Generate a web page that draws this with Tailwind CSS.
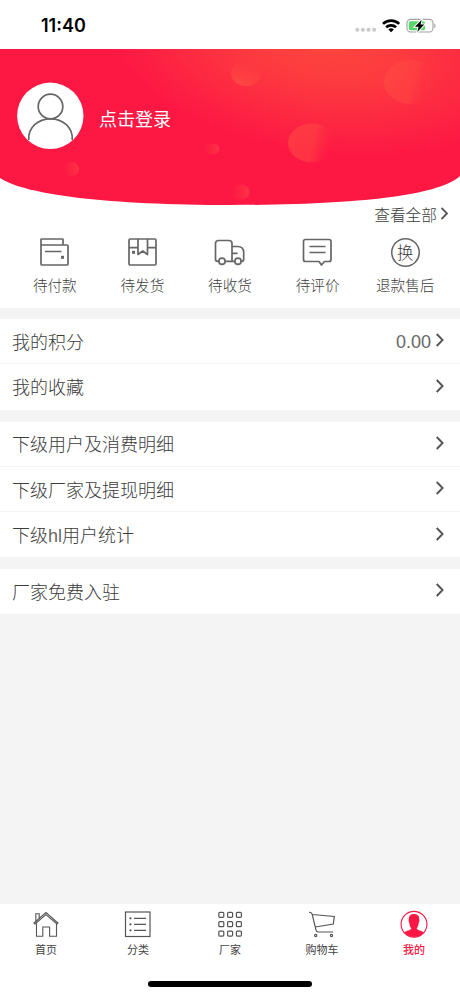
<!DOCTYPE html>
<html lang="zh-CN">
<head>
<meta charset="utf-8">
<meta name="viewport" content="width=device-width, initial-scale=1">
<title>我的</title>
<script src="https://cdn.jsdelivr.net/npm/@tailwindcss/browser@4"></script>
</head>
<body class="bg-white">
<div class="flex h-[996px] w-[460px] flex-col overflow-hidden bg-white font-['Liberation_Sans','Noto_Sans_CJK_SC',sans-serif] font-light text-[#3c3c3c]">

  <!-- status bar -->
  <header class="flex h-[49px] shrink-0 items-center justify-between pl-[41px] pr-6 pt-0.5">
    <span class="font-['Inter',sans-serif] text-[18px] leading-none font-semibold text-black">11:40</span>
    <svg class="h-[18px] w-[81px]" viewBox="355 16 81 18" fill="none">
      <g fill="#c9c9c9"><circle cx="357.300" cy="28.700" r="2"/><circle cx="362.900" cy="28.700" r="2"/><circle cx="368.500" cy="28.700" r="2"/><circle cx="374.100" cy="28.700" r="2"/></g>
      <g stroke="#000" stroke-width="2.700"><path d="M383 22.900a11.600 11.600 0 0 1 16.200 0"/><path d="M386.100 26.300a7.200 7.200 0 0 1 10 0"/></g>
      <path d="M388.300 28.500a4 4 0 0 1 5.600 0L391.100 31.300z" fill="#000"/>
      <rect x="407" y="18.400" width="26" height="12.600" rx="3.600" stroke="#a2a2a2" stroke-width="1.100"/>
      <path d="M434.300 22.500v4.500c1.500-.6 1.500-3.900 0-4.500z" fill="#999"/>
      <rect x="408.800" y="20.200" width="16.200" height="9" rx="1.800" fill="#56d769"/>
      <path d="M421.700 18.700l-6.800 7h3.700l-1.300 5.300 7-7.500h-3.800z" fill="#000" stroke="#fff" stroke-width="2" paint-order="stroke"/>
    </svg>
  </header>

  <!-- profile banner -->
  <section class="relative h-[156px] shrink-0">
    <svg class="absolute inset-0 h-[156px] w-[460px]" viewBox="0 0 460 156">
      <defs>
        <radialGradient id="glow" gradientUnits="userSpaceOnUse" cx="0" cy="0" r="1" gradientTransform="translate(325 -8) rotate(8) scale(220 112)">
          <stop offset="0" stop-color="#fd453d"/><stop offset=".35" stop-color="#fd3b3f"/><stop offset="1" stop-color="#fd1844"/>
        </radialGradient>
        <linearGradient id="orb" x1="0" y1="0" x2="1" y2="0.2">
          <stop offset="0" stop-color="#ff4b43" stop-opacity=".6"/><stop offset=".6" stop-color="#ff4443" stop-opacity=".6"/><stop offset="1" stop-color="#fd2a42" stop-opacity="0"/>
        </linearGradient>
        <linearGradient id="drop" x1="0.2" y1="1" x2="0.7" y2="0">
          <stop offset="0" stop-color="#ff5747" stop-opacity=".7"/><stop offset="1" stop-color="#ff4541" stop-opacity="0"/>
        </linearGradient>
        <linearGradient id="dot" x1="1" y1="0.4" x2="0" y2="0.5">
          <stop offset="0" stop-color="#ff4346" stop-opacity=".65"/><stop offset="1" stop-color="#ff3145" stop-opacity=".1"/>
        </linearGradient>
      </defs>
      <path d="M0 0H460V127C440 146 360 156 230 156C110 156 25 146 0 129Z" fill="url(#glow)"/>
      <ellipse cx="411" cy="33" rx="27" ry="22" fill="url(#orb)"/>
      <ellipse cx="312" cy="94" rx="24" ry="19.500" fill="url(#orb)"/>
      <ellipse cx="246" cy="24" rx="15" ry="13" fill="url(#drop)"/>
      <ellipse cx="212" cy="100" rx="7.500" ry="5.500" fill="url(#dot)"/>
      <ellipse cx="71.500" cy="120" rx="7.500" ry="7" fill="url(#dot)"/>
      <ellipse cx="241" cy="143" rx="8.500" ry="7.500" fill="url(#dot)"/>
    </svg>
    <div class="relative flex items-center gap-[15px] pl-[17px] pt-[33px]">
      <svg class="size-[67px]" viewBox="0 0 67 67" fill="none">
        <circle cx="33.300" cy="33.800" r="33.200" fill="#fff"/>
        <g stroke="#666" stroke-width="1.700"><circle cx="33.500" cy="24.500" r="12.300"/><path d="M11.700 58C11 45.500 21 36.800 33.500 36.800S56 45.500 55.300 58"/></g>
      </svg>
      <span class="pt-2 text-[18px] leading-6 font-normal text-white">点击登录</span>
    </div>
  </section>

  <!-- orders -->
  <section class="h-[103px] shrink-0">
    <div class="flex h-5 items-center justify-end gap-1 pr-[11px]">
      <span class="pt-0.5 text-[15.700px] leading-5">查看全部</span>
      <svg class="mb-[3px] h-[13px] w-2" viewBox="0 0 8 13" fill="none" stroke="#555" stroke-width="1.800"><path d="M.5 1l5.500 5.500L.5 12"/></svg>
    </div>
    <div class="grid grid-cols-5 px-[11px] pt-3 text-[14.600px] leading-5">
      <div class="flex flex-col items-center gap-2">
        <svg class="size-[31px]" viewBox="0 0 31 31" fill="none" stroke="#666" stroke-width="1.700" stroke-linejoin="round"><path d="M24 8V2.500Q24 2 23.500 2H2.500Q2 2 2 2.500V27Q2 28 3 28H28Q29 28 29 27V9Q29 8 28 8H2M6 14.500H22.500"/><rect x="22" y="18.800" width="3" height="3" fill="#666" stroke="none"/></svg>
        <span>待付款</span>
      </div>
      <div class="flex flex-col items-center gap-2">
        <svg class="size-[31px]" viewBox="0 0 31 31" fill="none" stroke="#666" stroke-width="1.700" stroke-linejoin="round"><rect x="2" y="2" width="27" height="26" rx="1.200"/><path d="M2 10.700H11M20.500 10.700H29M11 2V17.500L15.700 14L20.500 17.500V2"/><rect x="5" y="13.800" width="3" height="3" fill="#666" stroke="none"/></svg>
        <span>待发货</span>
      </div>
      <div class="flex flex-col items-center gap-2">
        <svg class="size-[31px]" viewBox="0 0 31 31" fill="none" stroke="#666" stroke-width="1.700"><path d="M4.900 24.300H3.500Q1.500 24.300 1.500 22.300V6.500Q1.500 3.500 4.500 3.500H15Q18 3.500 18 6.500V24.300H11.100M18 9.500H23.500Q29.700 9.500 29.700 15.500V22.300Q29.700 24.300 27.700 24.300H27.100M18 24.300H20.900M18 16.300H23.500"/><circle cx="8" cy="24.300" r="3.100"/><circle cx="24" cy="24.300" r="3.100"/></svg>
        <span>待收货</span>
      </div>
      <div class="flex flex-col items-center gap-2">
        <svg class="size-[31px]" viewBox="0 0 31 31" fill="none" stroke="#666" stroke-width="1.700" stroke-linejoin="round"><path d="M3.500 2.500H27Q29 2.500 29 4.500V22.500Q29 24.500 27 24.500H22.500L19.500 28L17 24.500H3.500Q1.500 24.500 1.500 22.500V4.500Q1.500 2.500 3.500 2.500ZM7.500 9.500H23.500M7.500 15.500H23.500"/></svg>
        <span>待评价</span>
      </div>
      <div class="flex flex-col items-center gap-2">
        <div class="grid size-[31px] place-items-center">
          <span class="flex size-[29px] items-center justify-center rounded-full text-[16.500px] leading-none ring-[1.500px] ring-[#666] ring-inset"><span class="pt-px">换</span></span>
        </div>
        <span>退款售后</span>
      </div>
    </div>
  </section>

  <!-- menu -->
  <main class="flex grow flex-col gap-3 bg-[#f4f4f4] pt-[11px] text-[18px] leading-6">
    <div class="divide-y divide-[#f4f4f4] bg-white">
      <div class="flex h-[45px] items-center justify-between pl-3 pr-4"><span class="pt-[3px]">我的积分</span><span class="flex items-center gap-[5px]"><span class="pt-[2px] text-[#666]">0.00</span><svg class="mb-[3px] h-[14px] w-2" viewBox="0 0 8 14" fill="none" stroke="#555" stroke-width="1.900"><path d="M.7 1l5.900 6L.7 13"/></svg></span></div>
      <div class="flex h-[46px] items-center justify-between pl-3 pr-4"><span class="pt-[2px]">我的收藏</span><svg class="mb-[3px] h-[14px] w-2" viewBox="0 0 8 14" fill="none" stroke="#555" stroke-width="1.900"><path d="M.7 1l5.900 6L.7 13"/></svg></div>
    </div>
    <div class="divide-y divide-[#f4f4f4] bg-white">
      <div class="flex h-[45px] items-center justify-between pl-3 pr-4"><span class="pt-[1px]">下级用户及消费明细</span><svg class="mb-[3px] h-[14px] w-2" viewBox="0 0 8 14" fill="none" stroke="#555" stroke-width="1.900"><path d="M.7 1l5.900 6L.7 13"/></svg></div>
      <div class="flex h-[45px] items-center justify-between pl-3 pr-4"><span class="pt-[3px]">下级厂家及提现明细</span><svg class="mb-[2px] h-[14px] w-2" viewBox="0 0 8 14" fill="none" stroke="#555" stroke-width="1.900"><path d="M.7 1l5.900 6L.7 13"/></svg></div>
      <div class="flex h-[45px] items-center justify-between pl-3 pr-4"><span class="pt-[3px]">下级<span class="text-[#666]">hl</span>用户统计</span><svg class="mb-[2px] h-[14px] w-2" viewBox="0 0 8 14" fill="none" stroke="#555" stroke-width="1.900"><path d="M.7 1l5.900 6L.7 13"/></svg></div>
    </div>
    <div class="bg-white">
      <div class="flex h-[45px] items-center justify-between pl-3 pr-4"><span class="pt-[3px]">厂家免费入驻</span><svg class="mb-[3px] h-[14px] w-2" viewBox="0 0 8 14" fill="none" stroke="#555" stroke-width="1.900"><path d="M.7 1l5.900 6L.7 13"/></svg></div>
    </div>
  </main>

  <!-- tab bar -->
  <footer class="flex h-[92px] shrink-0 flex-col items-center justify-between bg-white pb-[9px] pt-1.5">
    <nav class="grid w-full grid-cols-5 text-[11px] leading-4 font-normal text-[#444]">
      <div class="flex flex-col items-center gap-1">
        <svg class="size-7" viewBox="0 0 28 28" fill="none" stroke="#555" stroke-width="1.100"><path d="M2 13L14 2.500L26 13L25 14L14 4.700L3 14ZM3.800 10.800V3.800H7.200V8M4.500 13.500V26.300H10.800V17H17.600V26.300H24.500V13.500"/></svg>
        <span>首页</span>
      </div>
      <div class="flex flex-col items-center gap-1">
        <svg class="size-7" viewBox="0 0 28 28" fill="none" stroke="#555" stroke-width="1.200"><rect x="1.500" y="2" width="24.500" height="24.500"/><path d="M10 8.300H22M10 14.300H22M10 20.300H22"/><g fill="#555" stroke="none"><circle cx="6.500" cy="8.300" r="1.100"/><circle cx="6.500" cy="14.300" r="1.100"/><circle cx="6.500" cy="20.300" r="1.100"/></g></svg>
        <span>分类</span>
      </div>
      <div class="flex flex-col items-center gap-1">
        <svg class="size-7" viewBox="0 0 28 28" fill="none" stroke="#555" stroke-width="1.200"><rect x="2.800" y="2.300" width="5" height="5" rx="1"/><rect x="11.600" y="2.300" width="5" height="5" rx="1"/><rect x="20.400" y="2.300" width="5" height="5" rx="1"/><rect x="2.800" y="11.700" width="5" height="5" rx="1"/><rect x="11.600" y="11.700" width="5" height="5" rx="1"/><rect x="20.400" y="11.700" width="5" height="5" rx="1"/><rect x="2.800" y="21.100" width="5" height="5" rx="1"/><rect x="11.600" y="21.100" width="5" height="5" rx="1"/><rect x="20.400" y="21.100" width="5" height="5" rx="1"/></svg>
        <span>厂家</span>
      </div>
      <div class="flex flex-col items-center gap-1">
        <svg class="size-7" viewBox="0 0 28 28" fill="none" stroke="#555" stroke-width="1.200"><path d="M1 2.300Q3.800 2 4.200 4.300L8 20.200Q8.500 22 10.200 22H25M4.300 4.500L26.300 6.500L25.300 14L7.200 17"/><circle cx="7.700" cy="25.500" r="1.100"/><circle cx="23.500" cy="25.500" r="1.100"/></svg>
        <span>购物车</span>
      </div>
      <div class="flex flex-col items-center gap-1 font-medium text-[#fb1744]">
        <svg class="size-7" viewBox="0 0 28 28"><circle cx="14" cy="14.300" r="12.900" fill="#fff" stroke="#fb1744" stroke-width="1.100"/><path d="M4.200 22.500C6.500 20.500 11 20.500 11.300 18.300C10 17 9.400 14.500 9.300 12.700C8.300 11.500 8.700 9.800 8.800 8.300C9 5.300 11 3.900 14 3.900S19 5.300 19.200 8.300C19.300 9.800 19.700 11.500 18.700 12.700C18.600 14.500 18 17 16.700 18.300C17 20.500 21.500 20.500 23.800 22.500A12.900 12.900 0 0 1 4.200 22.500Z" fill="#fb1744"/></svg>
        <span>我的</span>
      </div>
    </nav>
    <div class="h-[6px] w-[164px] rounded-full bg-black"></div>
  </footer>
</div>
</body>
</html>
